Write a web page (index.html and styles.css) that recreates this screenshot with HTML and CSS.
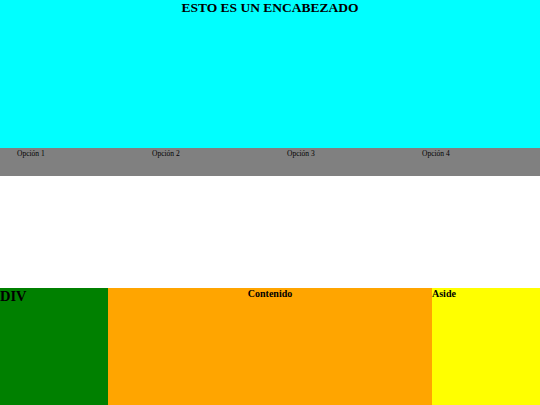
FILE: index.html
```html
<!DOCTYPE html>
<html lang="es">
<head>
<meta charset="utf-8">
<link rel="stylesheet" href="styles.css">
</head>
<body>
<header class="header"><h1 class="title">ESTO ES UN ENCABEZADO</h1></header>
<nav class="nav">
  <ul class="menu">
    <li class="item">Opción 1</li>
    <li class="item">Opción 2</li>
    <li class="item">Opción 3</li>
    <li class="item">Opción 4</li>
  </ul>
</nav>
<div class="spacer"></div>
<main class="row">
  <div class="col-div"><h2 class="div-title">DIV</h2></div>
  <section class="col-main"><h3 class="sub">Contenido</h3></section>
  <aside class="col-aside"><h3 class="sub">Aside</h3></aside>
</main>
</body>
</html>
```
FILE: styles.css
```css
html, body { margin: 0; padding: 0; }
body { font-family: "Liberation Serif", "Times New Roman", serif; color: #000; background: #fff; }
.header { background: #00ffff; height: 148px; }
.title { margin: 0; font-size: 13.5px; text-align: center; font-weight: bold; line-height: 16px; }
.nav { background: #808080; height: 28px; }
.menu { list-style: none; margin: 0; padding: 0; display: grid; grid-template-columns: repeat(4, 1fr); }
.item { font-size: 7.5px; padding: 1px 0 0 17px; line-height: 9px; }
.spacer { height: 112px; }
.row { display: grid; grid-template-columns: 108px 1fr 108px; height: 117px; }
.col-div { background: #008000; }
.col-main { background: #ffa500; text-align: center; }
.col-aside { background: #ffff00; }
.div-title { margin: 0; font-size: 14.5px; line-height: 16px; }
.sub { margin: 0; font-size: 10px; line-height: 12px; }
```
